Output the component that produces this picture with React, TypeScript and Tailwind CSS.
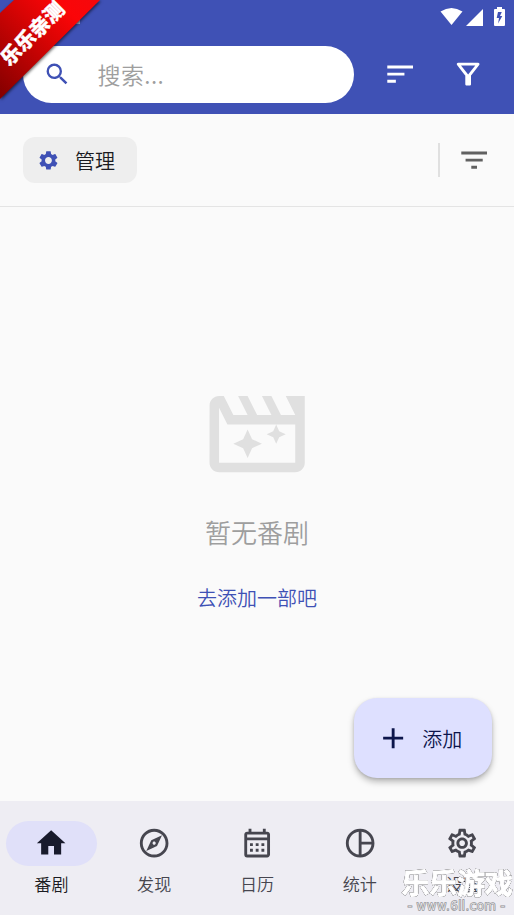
import React from "react";

const cjk = "font-['Noto_Sans_CJK_SC_DemiLight','Noto_Sans_CJK_SC',sans-serif]";

const paths = {
  search:
    "M15.5 14h-.79l-.28-.27A6.47 6.47 0 0 0 16 9.5 6.5 6.5 0 1 0 9.5 16c1.61 0 3.09-.59 4.23-1.57l.27.28v.79l5 4.99L20.49 19l-4.99-5zm-6 0C7.01 14 5 11.99 5 9.5S7.01 5 9.5 5 14 7.01 14 9.5 11.99 14 9.5 14z",
  sort: "M3 18h6v-2H3v2zM3 6v2h18V6H3zm0 7h12v-2H3v2z",
  funnel:
    "M7 6h10l-5.01 6.3L7 6zm-2.75-.39C6.27 8.2 10 13 10 13v6c0 .55.45 1 1 1h2c.55 0 1-.45 1-1v-6s3.72-4.8 5.74-7.39A.998.998 0 0 0 18.95 4H5.04c-.83 0-1.3.95-.79 1.61z",
  gear: "M19.14 12.94c.04-.3.06-.61.06-.94 0-.32-.02-.64-.07-.94l2.03-1.58c.18-.14.23-.41.12-.61l-1.92-3.32c-.12-.22-.37-.29-.59-.22l-2.39.96c-.5-.38-1.03-.7-1.62-.94l-.36-2.54c-.04-.24-.24-.41-.48-.41h-3.84c-.24 0-.43.17-.47.41l-.36 2.54c-.59.24-1.13.57-1.62.94l-2.39-.96c-.22-.08-.47 0-.59.22L2.74 8.87c-.12.21-.08.47.12.61l2.03 1.58c-.05.3-.09.63-.09.94s.02.64.07.94l-2.03 1.58c-.18.14-.23.41-.12.61l1.92 3.32c.12.22.37.29.59.22l2.39-.96c.5.38 1.03.7 1.62.94l.36 2.54c.05.24.24.41.48.41h3.84c.24 0 .44-.17.47-.41l.36-2.54c.59-.24 1.13-.56 1.62-.94l2.39.96c.22.08.47 0 .59-.22l1.92-3.32c.12-.22.07-.47-.12-.61l-2.01-1.58zM12 15.6c-1.98 0-3.6-1.62-3.6-3.6s1.62-3.6 3.6-3.6 3.6 1.62 3.6 3.6-1.62 3.6-3.6 3.6z",
  filterList: "M10 18h4v-2h-4v2zM3 6v2h18V6H3zm3 7h12v-2H6v2z",
  movie:
    "M22 4h-4l2 4h-3l-2-4h-2l2 4h-3l-2-4H8l2 4H7L5 4H4c-1.1 0-1.99.9-1.99 2L2 18c0 1.1.9 2 2 2h16c1.1 0 2-.9 2-2V4zM20 18H4V6.47L5.76 10H20v8zM10 11l-.94 2.06L7 14l2.06.94L10 17l.94-2.06L13 14l-2.06-.94zM16 10l-.63 1.37L14 12l1.37.63L16 14l.63-1.37L18 12l-1.37-.63z",
  add: "M19 13h-6v6h-2v-6H5v-2h6V5h2v6h6v2z",
  home: "M10 20v-6h4v6h5v-8h3L12 3 2 12h3v8z",
  explore:
    "M12 2C6.48 2 2 6.48 2 12s4.48 10 10 10 10-4.48 10-10S17.52 2 12 2zm0 18c-4.41 0-8-3.59-8-8s3.59-8 8-8 8 3.59 8 8-3.59 8-8 8zm-5.5-2.5 7.51-3.49L17.5 6.5 9.99 9.99 6.5 17.5zm5.5-6.6c.61 0 1.1.49 1.1 1.1s-.49 1.1-1.1 1.1-1.1-.49-1.1-1.1.49-1.1 1.1-1.1z",
  calendar:
    "M19 4h-1V2h-2v2H8V2H6v2H5c-1.11 0-1.99.9-1.99 2L3 20a2 2 0 0 0 2 2h14c1.1 0 2-.9 2-2V6c0-1.1-.9-2-2-2zm0 16H5V10h14v10zm0-12H5V6h14v2zM9 14H7v-2h2v2zm4 0h-2v-2h2v2zm4 0h-2v-2h2v2zm-8 4H7v-2h2v2zm4 0h-2v-2h2v2zm4 0h-2v-2h2v2z",
  pie: "M12 2C6.48 2 2 6.48 2 12s4.48 10 10 10 10-4.48 10-10S17.52 2 12 2zm1 2.07c3.61.45 6.48 3.33 6.93 6.93H13V4.07zM4 12c0-4.06 3.07-7.44 7-7.93v15.87c-3.93-.5-7-3.88-7-7.94zm9 7.93V13h6.93c-.45 3.61-3.32 6.48-6.93 6.93z",
  settings:
    "M19.43 12.98c.04-.32.07-.64.07-.98 0-.34-.03-.66-.07-.98l2.11-1.65c.19-.15.24-.42.12-.64l-2-3.46c-.09-.16-.26-.25-.44-.25-.06 0-.12.01-.17.03l-2.49 1c-.52-.4-1.08-.73-1.69-.98l-.38-2.65C14.46 2.18 14.25 2 14 2h-4c-.25 0-.46.18-.49.42l-.38 2.65c-.61.25-1.17.59-1.69.98l-2.49-1c-.06-.02-.12-.03-.18-.03-.17 0-.34.09-.43.25l-2 3.46c-.13.22-.07.49.12.64l2.11 1.65c-.04.32-.07.65-.07.98 0 .33.03.66.07.98l-2.11 1.65c-.19.15-.24.42-.12.64l2 3.46c.09.16.26.25.44.25.06 0 .12-.01.17-.03l2.49-1c.52.4 1.08.73 1.69.98l.38 2.65c.03.24.24.42.49.42h4c.25 0 .46-.18.49-.42l.38-2.65c.61-.25 1.17-.59 1.69-.98l2.49 1c.06.02.12.03.18.03.17 0 .34-.09.43-.25l2-3.46c.12-.22.07-.49-.12-.64l-2.11-1.65zm-1.98-1.71c.04.31.05.52.05.73 0 .21-.02.43-.05.73l-.14 1.13.89.7 1.08.84-.7 1.21-1.27-.51-1.04-.42-.9.68c-.43.32-.84.56-1.25.73l-1.06.43-.16 1.13-.2 1.35h-1.4l-.19-1.35-.16-1.13-1.06-.43c-.43-.18-.83-.41-1.23-.71l-.91-.7-1.06.43-1.27.51-.7-1.21 1.08-.84.89-.7-.14-1.13c-.03-.31-.05-.54-.05-.74s.02-.43.05-.73l.14-1.13-.89-.7-1.08-.84.7-1.21 1.27.51 1.04.42.9-.68c.43-.32.84-.56 1.25-.73l1.06-.43.16-1.13.2-1.35h1.39l.19 1.35.16 1.13 1.06.43c.43.18.83.41 1.23.71l.91.7 1.06-.43 1.27-.51.7 1.21-1.07.85-.89.7.14 1.13zM12 8c-2.21 0-4 1.79-4 4s1.79 4 4 4 4-1.79 4-4-1.79-4-4-4zm0 6c-1.1 0-2-.9-2-2s.9-2 2-2 2 .9 2 2-.9 2-2 2z",
};

function Icon({ name, className }: { name: keyof typeof paths; className: string }) {
  return (
    <svg viewBox="0 0 24 24" fill="currentColor" fillRule="evenodd" className={`shrink-0 ${className}`}>
      <path d={paths[name]} />
    </svg>
  );
}

const tabs: { icon: keyof typeof paths; label: string }[] = [
  { icon: "home", label: "番剧" },
  { icon: "explore", label: "发现" },
  { icon: "calendar", label: "日历" },
  { icon: "pie", label: "统计" },
  { icon: "settings", label: "设置" },
];

function StatusBar() {
  return (
    <div className="flex h-[34px] items-start pr-[9px] pt-[7px] text-white">
      <div className="ml-[76px] mt-[9px] h-[8px] w-[4px] bg-[#a9aec9]" />
      <svg className="ml-auto mr-[3px] mt-px h-[17px] w-[23px]" viewBox="0 0 23 17" fill="currentColor">
        <path d="M11.5 17 .5 3.6Q11.5-3.6 22.5 3.6z" />
      </svg>
      <svg className="mr-[11px] mt-[2px] h-[17px] w-[17px]" viewBox="0 0 17 17" fill="currentColor">
        <path d="M17 0v17H0z" />
      </svg>
      <svg className="h-[19px] w-[11px]" viewBox="0 0 11 19" fill="currentColor" fillRule="evenodd">
        <path d="M3 0h5v2h2q1 0 1 1v15q0 1-1 1H1q-1 0-1-1V3q0-1 1-1h2zM4 5 2.7 11H5l-.9 5.5L8.3 9H6l1.8-4z" />
      </svg>
    </div>
  );
}

function Ribbon() {
  return (
    <div className="absolute left-0 top-0 h-[106px] w-[106px]">
      <svg className="absolute left-0 top-0 h-[106px] w-[106px]" viewBox="0 0 106 106">
        <defs>
          <linearGradient id="ribbon" gradientUnits="userSpaceOnUse" x1="0" y1="95" x2="95" y2="0">
            <stop offset="0" stopColor="#850000" />
            <stop offset="0.55" stopColor="#d90404" />
            <stop offset="0.8" stopColor="#fb0508" />
            <stop offset="1" stopColor="#f5080c" />
          </linearGradient>
        </defs>
        <path d="M14 0H100L0 99V13z" fill="url(#ribbon)" className="drop-shadow-[1px_1px_1.5px_rgba(0,0,0,0.6)]" />
      </svg>
      <div className="absolute left-[-9px] top-[19px] w-[82px] -rotate-45 whitespace-nowrap text-center font-['Noto_Sans_CJK_SC',sans-serif] text-[20px] font-black leading-[28px] text-white [-webkit-text-stroke:0.4px_#ffffff]">
        乐乐亲测
      </div>
    </div>
  );
}

function Watermark() {
  return (
    <div className="absolute bottom-0 right-0 flex h-[50px] w-[114px] flex-col items-center text-white">
      <div className="-mt-px whitespace-nowrap font-['Noto_Sans_CJK_SC',sans-serif] text-[28px] font-bold leading-[36px] tracking-[-0.2px] [-webkit-text-stroke:1px_#ffffff] [filter:drop-shadow(0_0_0.7px_#55555a)_drop-shadow(0_0_0.7px_#77777b)]">
        乐乐游戏
      </div>
      <div className="whitespace-nowrap pr-px font-['DejaVu_Sans',sans-serif] text-[12px] leading-[13px] tracking-[0.35px] [-webkit-text-stroke:1.6px_#96969a] [paint-order:stroke_fill]">
        - www.6ll.com -
      </div>
    </div>
  );
}

export default function App() {
  return (
    <div className={`relative flex h-[915px] w-[514px] flex-col overflow-hidden bg-[#fafafa] font-[350] ${cjk}`}>
      <header className="h-[114px] shrink-0 bg-[#3f51b5]">
        <StatusBar />
        <div className="mt-3 flex items-center pl-[23px] text-white">
          <div className="flex h-[57px] w-[331px] items-center rounded-full bg-white pl-[20px]">
            <Icon name="search" className="size-[28.5px] text-[#3f51b5]" />
            <span className="-mt-[2px] ml-[26px] text-[23px] leading-[34px] tracking-[0.4px] text-[#9e9e9e]">搜索...</span>
          </div>
          <Icon name="sort" className="ml-[28.5px] size-[34.3px]" />
          <Icon name="funnel" className="ml-[34.5px] size-[34.3px]" />
        </div>
      </header>

      <div className="flex h-[93px] shrink-0 items-center border-b border-[#e4e4e4] pl-[23px] pr-[23px]">
        <button className="flex h-[46px] w-[114px] items-center rounded-[12px] bg-[#eeeeee] pl-[14px] text-[20px] text-[#1b1b21]">
          <Icon name="gear" className="size-[22.9px] text-[#3f51b5]" />
          <span className="ml-[15px] mt-[2px]">管理</span>
        </button>
        <div className="ml-auto h-[34px] w-[2px] bg-[#e0e0e0]" />
        <Icon name="filterList" className="ml-[17px] size-[34.3px] text-[#616161]" />
      </div>

      <main className="flex flex-1 flex-col items-center pt-[169.5px]">
        <Icon name="movie" className="size-[114.3px] text-[#e0e0e0]" />
        <p className="mt-[22.5px] text-[26px] leading-[38px] text-[#9e9e9e]">暂无番剧</p>
        <button className="mt-[32px] text-[20px] leading-[30px] text-[#3f51b5]">去添加一部吧</button>
      </main>

      <nav className="flex h-[114px] shrink-0 bg-[#eeedf3]">
        {tabs.map((tab, i) => (
          <div key={tab.icon} className="flex flex-1 flex-col items-center pt-[20px]">
            <div
              className={`flex h-[45px] w-[91.4px] items-center justify-center rounded-full ${
                i === 0 ? "bg-[#e0e0f9] text-[#181a2c]" : "text-[#46464f]"
              }`}
            >
              <Icon name={tab.icon} className="size-[34.3px]" />
            </div>
            <span className={`mt-[5px] text-[17.1px] leading-[25px] ${i === 0 ? "text-[#1b1b21]" : "text-[#46464f]"}`}>
              {tab.label}
            </span>
          </div>
        ))}
      </nav>

      <button className="absolute left-[353.5px] top-[698px] flex h-[80px] w-[138px] items-center rounded-[23px] bg-[#dee0ff] pl-[22.5px] text-[20px] text-[#0c154b] shadow-[0_4px_6px_rgba(0,0,0,0.25),0_1px_3px_rgba(0,0,0,0.12)]">
        <Icon name="add" className="size-[34.3px]" />
        <span className="ml-[12px] mt-[2px]">添加</span>
      </button>
      <Ribbon />
      <Watermark />
    </div>
  );
}
